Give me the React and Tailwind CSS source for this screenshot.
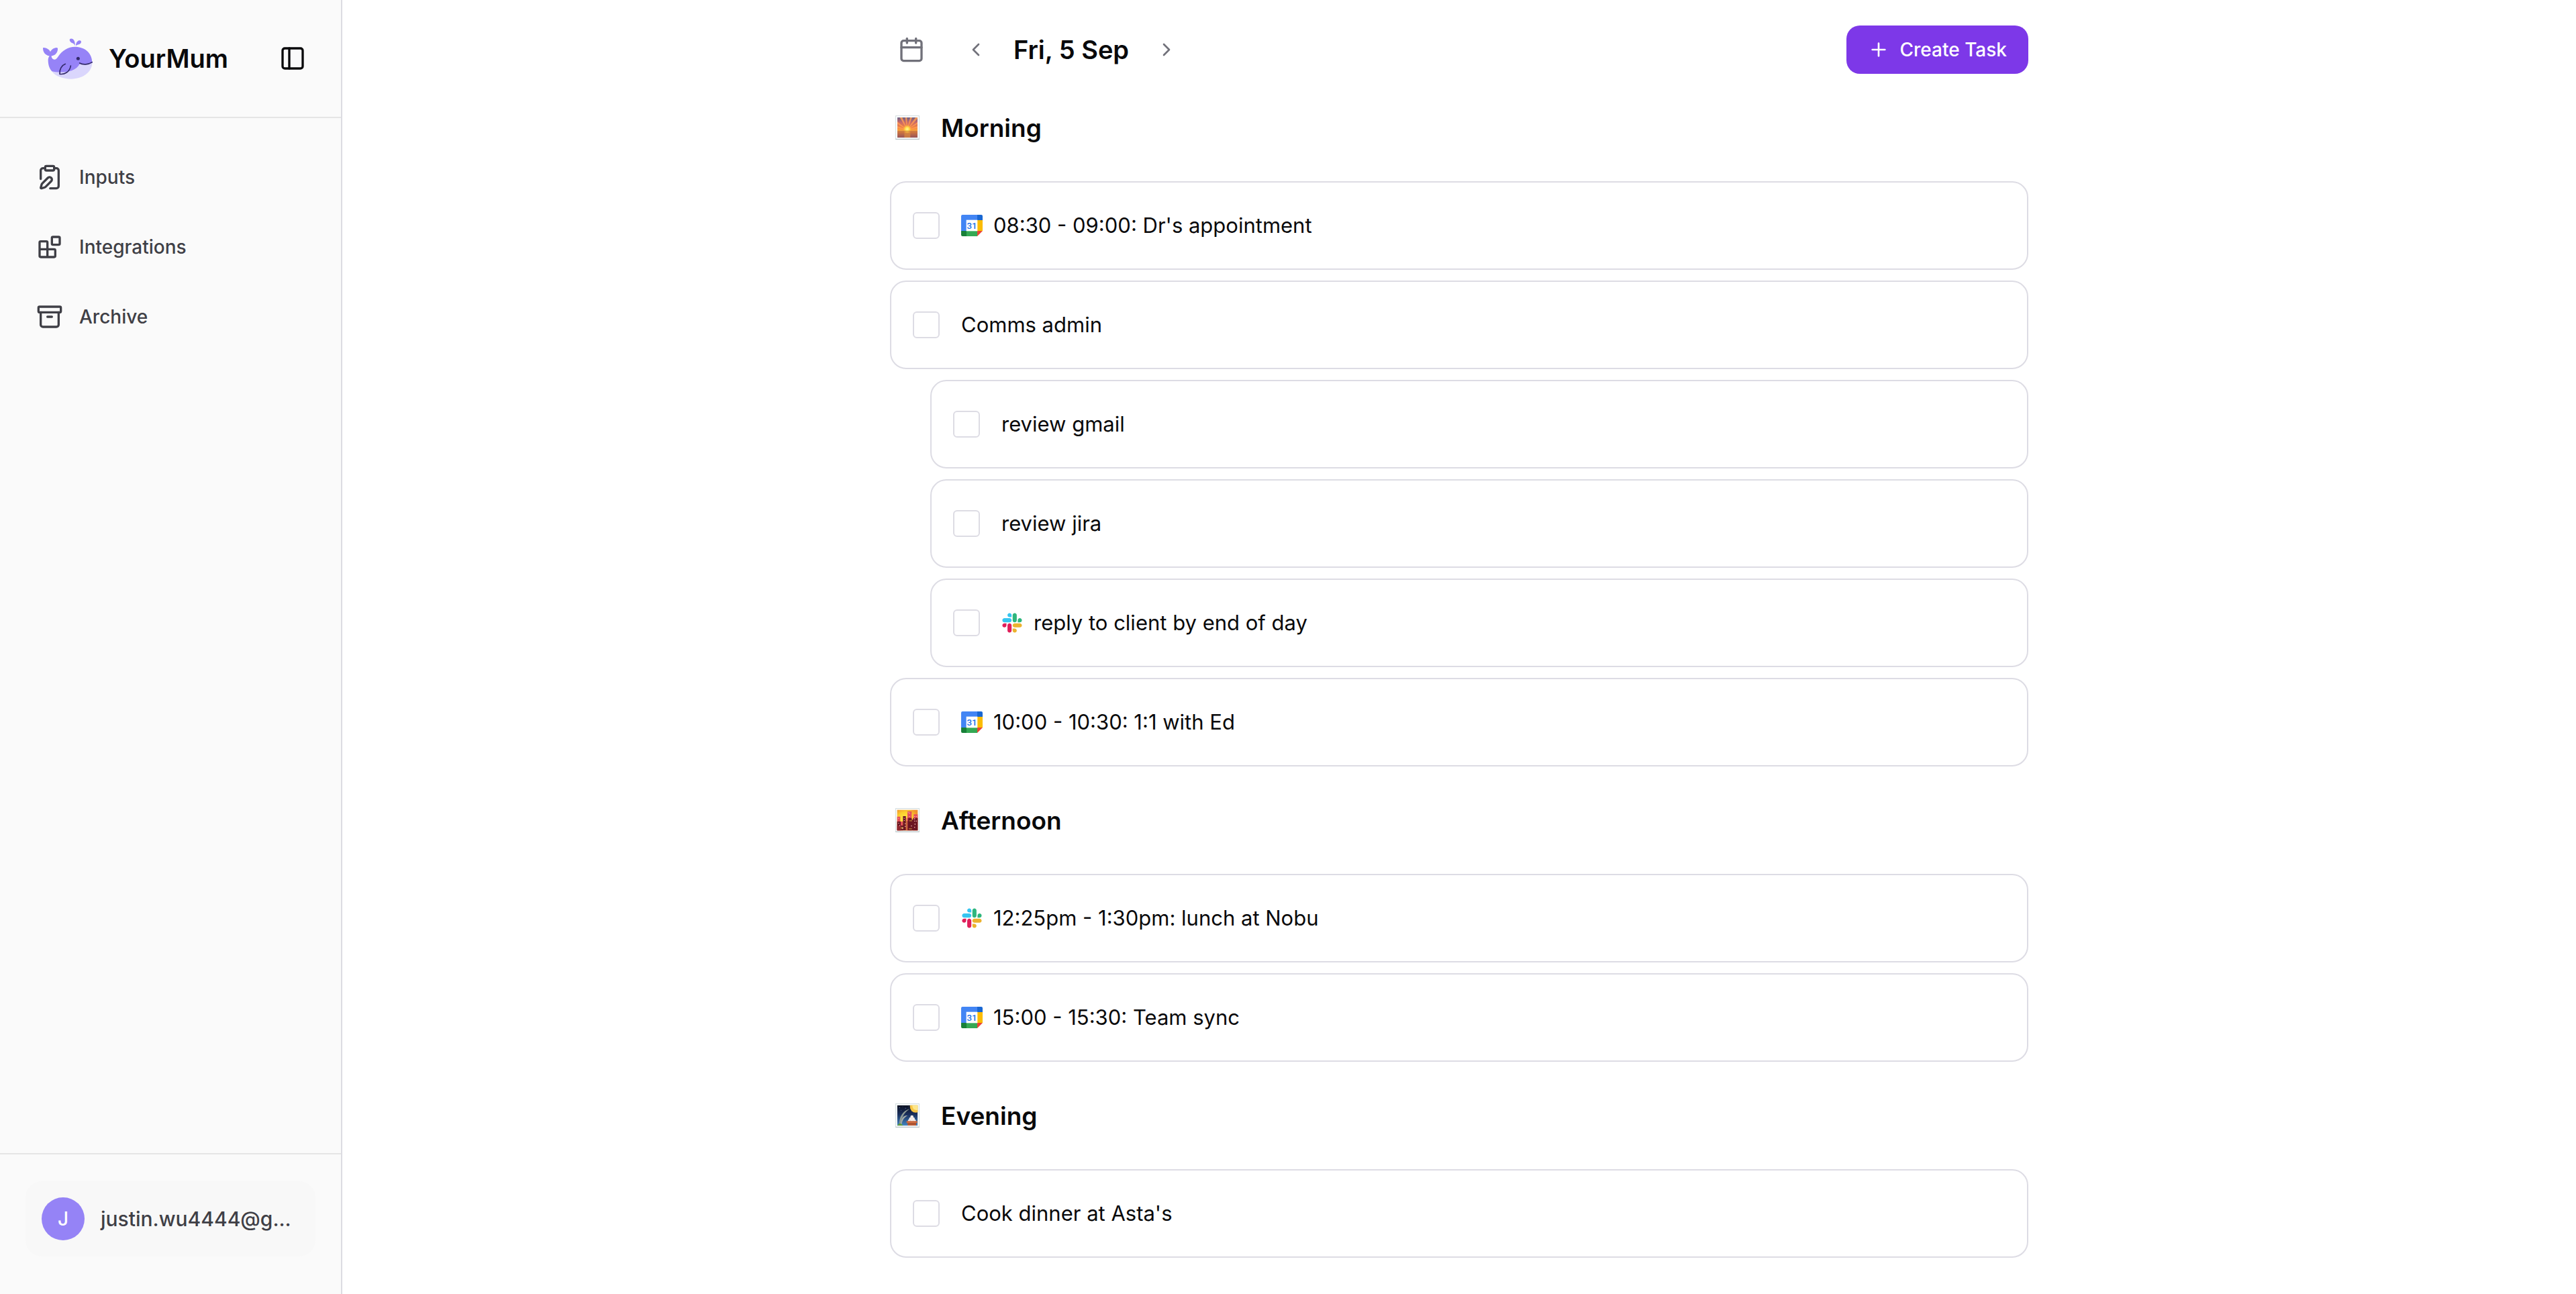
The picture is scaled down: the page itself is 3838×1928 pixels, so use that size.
import { Archive, Calendar, ChevronLeft, ChevronRight, ClipboardPen, PanelLeft, Plus } from "lucide-react";

function WhaleLogo() {
  return (
    <svg viewBox="72 43 222 183" className="h-[61px] w-[74px] shrink-0" aria-hidden="true">
      <path
        d="M95 140C95 132 98 127 101 122C84 120 72 106 72 88C72 84 76 84 80 86C92 88 102 96 105 104C109 94 120 86 132 85C138 85 139 88 138 93C137 108 126 120 110 122C110 132 116 139 125 138C131 138 135 131 141 123C158 98 184 81 215 81C258 81 291 108 292 150C292 170 270 190 232 205C190 215 140 208 112 191C100 178 95 160 95 140Z"
        fill="#9683f7"
      />
      <path
        d="M112 191C135 197 175 196 200 188C218 181 230 170 237 157C255 163 276 160 292 152C292 195 250 225 198 225C160 225 126 212 112 191Z"
        fill="#dad6fc"
      />
      <path d="M215 77C212 67 208 66 200 63C192 59 189 50 193 46C198 42 206 45 210 51C214 57 216 66 215 77Z" fill="#9683f7" />
      <path d="M219 76C219 64 225 55 234 53C241 52 245 56 242 63C239 70 226 71 219 76Z" fill="#9683f7" />
      <circle cx="229" cy="134" r="7.5" fill="#332a6b" />
      <g fill="none" stroke="#332a6b" strokeWidth="5" strokeLinecap="round" strokeLinejoin="round">
        <path d="M236 154C250 163 276 161 292 150" />
        <path d="M172 158C156 164 145 182 147 203C168 206 192 194 196 166" />
      </g>
    </svg>
  );
}

function BlocksIcon({ size }) {
  return (
    <svg
      width={size}
      height={size}
      viewBox="0 0 24 24"
      fill="none"
      stroke="currentColor"
      strokeWidth="2"
      strokeLinecap="round"
      strokeLinejoin="round"
      aria-hidden="true"
    >
      <rect width="7" height="7" x="14" y="3" rx="1" />
      <path d="M10 21V8a1 1 0 0 0-1-1H4a1 1 0 0 0-1 1v12a1 1 0 0 0 1 1h12a1 1 0 0 0 1-1v-5a1 1 0 0 0-1-1H3" />
    </svg>
  );
}

function GoogleCalendarIcon() {
  return (
    <svg viewBox="0 0 96 96" className="size-8 shrink-0" aria-hidden="true">
      <path d="M6 0H72V24H24V72H0V6Q0 0 6 0Z" fill="#4285f4" />
      <path d="M72 0H90Q96 0 96 6V24H72Z" fill="#1967d2" />
      <path d="M72 24H96V72H72Z" fill="#fbbc04" />
      <path d="M24 72H72V96H24Z" fill="#34a853" />
      <path d="M0 72H24V96H6Q0 96 0 90Z" fill="#188038" />
      <path d="M72 72H96L72 96Z" fill="#ea4335" />
      <path d="M23 23H73V73H23Z" fill="#fff" />
      <text x="48" y="62" textAnchor="middle" fontSize="40" fontWeight="500" fill="#1a73e8" fontFamily="Roboto, sans-serif">
        31
      </text>
    </svg>
  );
}

function SlackIcon() {
  return (
    <svg viewBox="-6 -6 135 135" className="size-8 shrink-0" aria-hidden="true">
      <path d="M25.8 77.6c0 7.1-5.8 12.9-12.9 12.9S0 84.7 0 77.6s5.8-12.9 12.9-12.9h12.9v12.9zm6.5 0c0-7.1 5.8-12.9 12.9-12.9s12.9 5.8 12.9 12.9v32.3c0 7.1-5.8 12.9-12.9 12.9s-12.9-5.8-12.9-12.9V77.6z" fill="#e01e5a" />
      <path d="M45.2 25.8c-7.1 0-12.9-5.8-12.9-12.9S38.1 0 45.2 0s12.9 5.8 12.9 12.9v12.9H45.2zm0 6.5c7.1 0 12.9 5.8 12.9 12.9s-5.8 12.9-12.9 12.9H12.9C5.8 58.1 0 52.3 0 45.2s5.8-12.9 12.9-12.9h32.3z" fill="#36c5f0" />
      <path d="M97 45.2c0-7.1 5.8-12.9 12.9-12.9s12.9 5.8 12.9 12.9-5.8 12.9-12.9 12.9H97V45.2zm-6.5 0c0 7.1-5.8 12.9-12.9 12.9s-12.9-5.8-12.9-12.9V12.9C64.7 5.8 70.5 0 77.6 0s12.9 5.8 12.9 12.9v32.3z" fill="#2eb67d" />
      <path d="M77.6 97c7.1 0 12.9 5.8 12.9 12.9s-5.8 12.9-12.9 12.9-12.9-5.8-12.9-12.9V97h12.9zm0-6.5c-7.1 0-12.9-5.8-12.9-12.9s5.8-12.9 12.9-12.9h32.3c7.1 0 12.9 5.8 12.9 12.9s-5.8 12.9-12.9 12.9H77.6z" fill="#ecb22e" />
    </svg>
  );
}

function PictureFrame({ children }) {
  return (
    <svg viewBox="0 0 108 108" className="size-9 shrink-0" aria-hidden="true">
      <rect x="1" y="1" width="106" height="106" rx="2" fill="#fafcfc" stroke="#c3d0d2" strokeWidth="2.5" />
      <path d="M1 106H107" stroke="#aebcc0" strokeWidth="3" />
      {children}
    </svg>
  );
}

function SunriseIcon() {
  return (
    <PictureFrame>
      <defs>
        <linearGradient id="sunrise-sky" x1="0" y1="0" x2="0" y2="1">
          <stop offset="0" stopColor="#6b6186" />
          <stop offset="0.35" stopColor="#c9696a" />
          <stop offset="0.75" stopColor="#f5863f" />
          <stop offset="1" stopColor="#fbb03c" />
        </linearGradient>
        <linearGradient id="sunrise-sea" x1="0" y1="0" x2="0" y2="1">
          <stop offset="0" stopColor="#d97c3a" />
          <stop offset="1" stopColor="#96545a" />
        </linearGradient>
        <radialGradient id="sunrise-sun">
          <stop offset="0" stopColor="#fff59a" />
          <stop offset="0.45" stopColor="#ffe04a" />
          <stop offset="1" stopColor="#ffb038" stopOpacity="0" />
        </radialGradient>
      </defs>
      <rect x="9" y="9" width="90" height="62" fill="url(#sunrise-sky)" />
      <path
        d="M53 64L9 56V48ZM53 64L9 38V28ZM53 64L20 9H31ZM53 64L44 9H52ZM53 64L66 9H75ZM53 64L90 9H99V14ZM53 64L99 30V38ZM53 64L99 48V56Z"
        fill="#ff9b52"
        opacity="0.85"
      />
      <rect x="9" y="70" width="90" height="29" fill="url(#sunrise-sea)" />
      <rect x="40" y="70" width="27" height="29" fill="#d88a42" opacity="0.7" />
      <circle cx="53" cy="61" r="20" fill="url(#sunrise-sun)" />
      <path d="M9 70H99" stroke="#b8683e" strokeWidth="2" />
    </PictureFrame>
  );
}

function CitySunsetIcon() {
  return (
    <PictureFrame>
      <defs>
        <radialGradient id="city-sky" cx="0.4" cy="0.5" r="0.65">
          <stop offset="0" stopColor="#fff04a" />
          <stop offset="0.6" stopColor="#fbd02e" />
          <stop offset="1" stopColor="#f0902c" />
        </radialGradient>
      </defs>
      <rect x="8" y="8" width="92" height="92" fill="url(#city-sky)" />
      <path d="M8 38H22V60H34V100H8ZM54 15H73V100H50V44H54ZM82 28H100V100H78V46H82Z" fill="#e5505a" />
      <path d="M8 60H24V78H34V36H47V100H8ZM57 44H73V52H80V44H100V100H57Z" fill="#6b1522" />
      <path d="M8 78H24V100H8ZM47 58H57V100H47Z" fill="#8e2630" />
      <path d="M49 56H53V100H49Z" fill="#f58b4a" />
      <path d="M62 54H75V59H62ZM24 84H36V94H24ZM60 90H74V95H60Z" fill="#a5622f" />
      <g fill="#efb6b0">
        <path d="M61 20h4v5h-4zM56 18h3v4h-3zM61 36h4v3h-4zM84 36h4v3h-4zM92 36h4v3h-4zM84 46h4v4h-4zM84 56h4v4h-4zM92 56h4v4h-4zM13 44h3v4h-3zM13 66h4v3h-4zM38 44h4v3h-4zM38 54h4v3h-4zM42 68h4v4h-4zM42 80h4v4h-4zM18 76h3v4h-3zM30 88h4v4h-4zM86 70h4v4h-4zM70 78h4v4h-4zM84 84h4v4h-4z" />
      </g>
    </PictureFrame>
  );
}

function MoonViewingIcon() {
  return (
    <PictureFrame>
      <defs>
        <linearGradient id="moon-sky" x1="0" y1="0" x2="0" y2="1">
          <stop offset="0" stopColor="#0b1020" />
          <stop offset="0.45" stopColor="#1a2f5c" />
          <stop offset="1" stopColor="#4387c4" />
        </linearGradient>
        <clipPath id="moon-frame">
          <rect x="8" y="8" width="92" height="92" />
        </clipPath>
      </defs>
      <g clipPath="url(#moon-frame)">
        <rect x="8" y="8" width="92" height="92" fill="url(#moon-sky)" />
        <circle cx="91" cy="15" r="26" fill="#f7c545" />
        <circle cx="94" cy="12" r="18" fill="#fde68a" />
        <path d="M18 100C16 70 26 36 64 25C48 36 26 54 24 98Z" fill="#8d9a94" />
        <path d="M24 96C24 68 36 52 55 54C42 62 30 72 28 98Z" fill="#a5aca8" />
        <path d="M8 100C20 84 22 88 36 100Z" fill="#5f9c3c" />
        <g fill="#f4ece8">
          <circle cx="74" cy="60" r="7" />
          <circle cx="68" cy="69" r="7" />
          <circle cx="80" cy="69" r="7" />
          <circle cx="62" cy="77" r="6" />
          <circle cx="74" cy="78" r="7" />
          <circle cx="86" cy="77" r="6" />
        </g>
        <path d="M50 79H98V88H93V100H55V88H50Z" fill="#c9683f" />
        <path d="M55 90H93V94H55Z" fill="#8e3f24" />
        <path d="M17 18h3v3h-3zM32 14h2v2h-2zM44 20h3v3h-3zM24 30h2v2h-2zM58 14h2v2h-2z" fill="#6c86c8" />
      </g>
    </PictureFrame>
  );
}

const navItems = [
  { label: "Inputs", Icon: ClipboardPen },
  { label: "Integrations", Icon: BlocksIcon },
  { label: "Archive", Icon: Archive },
];

const sections = [
  {
    title: "Morning",
    Icon: SunriseIcon,
    tasks: [
      { title: "08:30 - 09:00: Dr's appointment", Source: GoogleCalendarIcon },
      { title: "Comms admin" },
      { title: "review gmail", nested: true },
      { title: "review jira", nested: true },
      { title: "reply to client by end of day", Source: SlackIcon, nested: true },
      { title: "10:00 - 10:30: 1:1 with Ed", Source: GoogleCalendarIcon },
    ],
  },
  {
    title: "Afternoon",
    Icon: CitySunsetIcon,
    tasks: [
      { title: "12:25pm - 1:30pm: lunch at Nobu", Source: SlackIcon },
      { title: "15:00 - 15:30: Team sync", Source: GoogleCalendarIcon },
    ],
  },
  {
    title: "Evening",
    Icon: MoonViewingIcon,
    tasks: [{ title: "Cook dinner at Asta's" }],
  },
];

function Sidebar() {
  return (
    <aside className="flex w-[510px] shrink-0 flex-col border-r-2 border-[#dcdce2] bg-[#fafafa]">
      <div className="flex h-44 items-center border-b-2 border-[#e5e5e5] pr-11 pl-16">
        <WhaleLogo />
        <span className="ml-6 text-[38px] leading-none font-semibold">YourMum</span>
        <button type="button" aria-label="Toggle sidebar" className="ml-auto p-2">
          <PanelLeft size={40} />
        </button>
      </div>
      <nav className="flex flex-1 flex-col gap-4 px-8 py-11">
        {navItems.map(({ label, Icon }) => (
          <a key={label} href="#" className="flex h-[88px] items-center gap-6 px-[22px] text-[28px] font-medium text-[#3f3f46]">
            <Icon size={40} />
            {label}
          </a>
        ))}
      </nav>
      <div className="border-t-2 border-[#e5e5e5] px-[38px] pt-10 pb-14">
        <button type="button" className="flex w-full items-center gap-6 rounded-3xl bg-[#f8f8f8] p-6 text-left">
          <span className="flex size-16 shrink-0 items-center justify-center rounded-full bg-[#9583f6] text-[28px] font-medium text-white">
            J
          </span>
          <span className="text-[30px] leading-none font-medium whitespace-nowrap text-[#3f3f46]">justin.wu4444@g...</span>
        </button>
      </div>
    </aside>
  );
}

function TaskCard({ title, Source, nested }) {
  return (
    <li className={nested ? "ml-15" : ""}>
      <label className="flex h-33 items-center rounded-3xl border-2 border-[#dddce4] bg-white px-8 text-[31px]">
        <input
          type="checkbox"
          className="mr-8 size-10 shrink-0 appearance-none rounded-md border-2 border-[#dddce4] bg-white checked:bg-[#7d38e8]"
        />
        {Source && (
          <span className="mr-4">
            <Source />
          </span>
        )}
        {title}
      </label>
    </li>
  );
}

export default function App() {
  return (
    <div className="flex min-h-screen bg-white font-['Inter',sans-serif] text-[#09090b]">
      <Sidebar />
      <main className="flex-1 px-8 pt-[38px] pb-[54px]">
        <div className="mx-auto max-w-[1696px]">
          <header className="flex h-18 items-center">
            <button type="button" aria-label="Open calendar" className="mr-8 flex size-16 items-center justify-center text-[#71717a]">
              <Calendar size={40} />
            </button>
            <button type="button" aria-label="Previous day" className="flex size-16 items-center justify-center text-[#71717a]">
              <ChevronLeft size={32} />
            </button>
            <h1 className="min-w-[220px] px-2 text-center text-[38px] leading-none font-semibold">Fri, 5 Sep</h1>
            <button type="button" aria-label="Next day" className="flex size-16 items-center justify-center text-[#71717a]">
              <ChevronRight size={32} />
            </button>
            <button
              type="button"
              className="ml-auto flex h-18 items-center gap-4 rounded-[20px] bg-[#7d38e8] px-8 text-[28px] font-medium text-white"
            >
              <Plus size={32} />
              Create Task
            </button>
          </header>
          {sections.map(({ title, Icon, tasks }) => (
            <section key={title}>
              <h2 className="flex h-40 items-center gap-8 px-2 text-[37px] leading-none font-semibold">
                <Icon />
                {title}
              </h2>
              <ul className="flex flex-col gap-4">
                {tasks.map((task) => (
                  <TaskCard key={task.title} {...task} />
                ))}
              </ul>
            </section>
          ))}
        </div>
      </main>
    </div>
  );
}
